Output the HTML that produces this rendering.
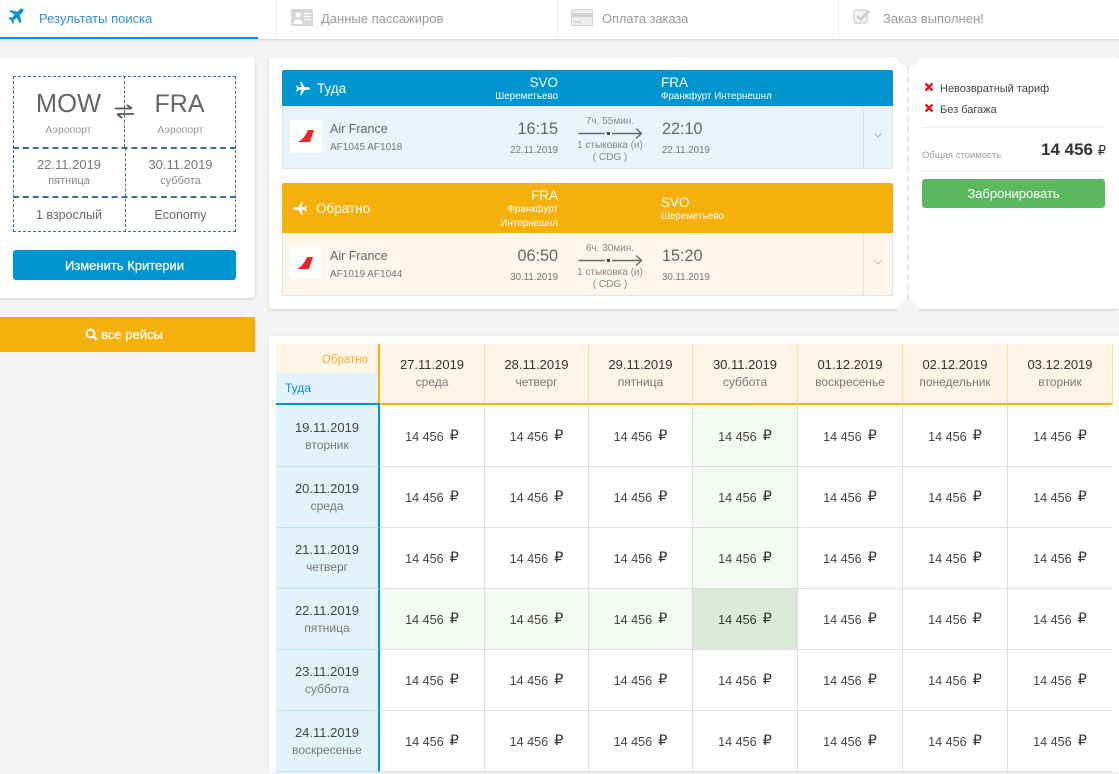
<!DOCTYPE html>
<html><head><meta charset="utf-8"><style>
*{box-sizing:border-box;margin:0;padding:0}
html,body{width:1119px;height:772px;overflow:hidden;background:#f3f3f3;font-family:"Liberation Sans",sans-serif;color:#555}
.a{position:absolute;white-space:nowrap}
.r{text-align:right}.c{text-align:center}
.card{position:absolute;background:#fff;box-shadow:0 1px 3px rgba(0,0,0,.15);border-radius:3px}
.dl{position:absolute;border-style:dashed;border-color:#3d7188;border-width:0}
#g{position:absolute;left:276px;top:344px;display:grid;grid-template-columns:104px 105px 104px 104px 105px 105px 105px 105px;grid-template-rows:61px 62px 61px 61px 61px 61px 61px}
#g>div{text-align:center;font-size:12.600px;border-right:1px solid #ddd;border-bottom:1px solid #ddd;color:#444}
#g>.h{background:#fef5e6;border-right:1px solid #fbdc9f;border-bottom:2px solid #f5b00b;padding-top:12px;line-height:17px;color:#333;font-size:13px}
#g small{display:block;font-size:12px;color:#777;line-height:18px}
#g>.d{background:#e3f3fb;border-right:2px solid #0094d2;border-bottom:1px solid #bfe3f3;padding-top:13px;line-height:17px;font-size:13px}
#g>.p{line-height:63px}
#g>.t{line-height:64px}
#g>.e{background:#f4f9f3}
#g>.f{background:#dbead8;color:#333}
#g>.l{border-right-color:transparent}
.rb{font-size:14.500px;margin-left:6px;font-family:"DejaVu Sans",sans-serif;color:#333;position:relative;top:-1px;line-height:1}
</style></head><body>

<!-- top nav -->
<div class="a" style="left:0;top:0;width:1119px;height:39px;background:#fff;box-shadow:0 1px 2px rgba(0,0,0,.15)"></div>
<div class="a" style="left:0;top:37px;width:258px;height:2px;background:#0094d2"></div>
<div class="a" style="left:276px;top:0;width:1px;height:39px;background:#f0f0f0"></div>
<div class="a" style="left:557px;top:0;width:1px;height:39px;background:#f0f0f0"></div>
<div class="a" style="left:838px;top:0;width:1px;height:39px;background:#f0f0f0"></div>
<svg class="a" style="left:8px;top:8px" width="16" height="17" viewBox="0 0 16 17"><path d="M15 .8c-1-.6-2.300-.2-3.200.7L9.500 3.800 2.800 2 1.300 3.300 6.600 6.600 3.900 9.600 1.500 9.200.3 10.300 3.300 12.300 4.800 16 6 14.800 5.700 12.500 8.900 9.700 12 15.500 13.500 14 11.800 7 14.300 4.500C15.200 3.500 15.700 1.800 15 .8z" fill="#0d8fd0"/></svg>
<div class="a" style="left:39px;top:11px;font-size:13px;color:#2d93d3">Результаты поиска</div>
<svg class="a" style="left:291px;top:9px" width="22" height="17" viewBox="0 0 22 17"><rect width="22" height="17" rx="1" fill="#d6d6d6"/><circle cx="7" cy="6" r="2.800" fill="#fff"/><path d="M2.500 15c0-3 1.500-4.500 4.500-4.500s4.500 1.500 4.500 4.500z" fill="#fff"/><path d="M13 4.500h7M13 7.500h7M13 10.500h7" stroke="#fff" stroke-width="1.200"/></svg>
<div class="a" style="left:321px;top:11px;font-size:13px;color:#999">Данные пассажиров</div>
<svg class="a" style="left:571px;top:9px" width="22" height="17" viewBox="0 0 22 17"><rect x=".5" y=".5" width="21" height="16" rx="1" fill="#eee" stroke="#d2d2d2"/><rect x="1" y="4" width="20" height="4" fill="#cfcfcf"/><path d="M3 13h3M7 13h3" stroke="#bbb"/></svg>
<div class="a" style="left:602px;top:11px;font-size:12.800px;color:#999">Оплата заказа</div>
<svg class="a" style="left:853px;top:8px" width="18" height="18" viewBox="0 0 18 18"><rect x="1" y="2" width="13" height="13" rx="2" fill="#f2f2f2" stroke="#d5d5d5" stroke-width="1.500"/><path d="M4 8l3.500 3.500L16 3" fill="none" stroke="#cfcfcf" stroke-width="3"/></svg>
<div class="a" style="left:883px;top:11px;font-size:13px;color:#999">Заказ выполнен!</div>

<!-- left card -->
<div class="card" style="left:-3px;top:57px;width:258px;height:241px"></div>
<div class="dl" style="left:13px;top:76px;width:223px;height:156px;border-width:1px"></div>
<div class="dl" style="left:13px;top:147px;width:223px;border-top-width:2px"></div>
<div class="dl" style="left:13px;top:196px;width:223px;border-top-width:2px"></div>
<div class="dl" style="left:124px;top:76px;height:71px;border-left-width:1px"></div>
<div class="dl" style="left:125px;top:148px;height:84px;border-left-width:1px"></div>
<div class="a c" style="left:13px;top:88px;width:111px;font-size:25.500px;color:#666;line-height:32px">MOW</div>
<div class="a c" style="left:124px;top:88px;width:111px;font-size:25px;color:#666;line-height:32px">FRA</div>
<svg class="a" style="left:115px;top:104px" width="19" height="15" viewBox="0 0 19 15"><path d="M0 4.500h16M12 1l5 3.500M19 10H3M7 14l-5-4" stroke="#555" stroke-width="1.800" fill="none"/></svg>
<div class="a c" style="left:13px;top:124px;width:111px;font-size:10.500px;color:#999">Аэропорт</div>
<div class="a c" style="left:125px;top:124px;width:111px;font-size:10.500px;color:#999">Аэропорт</div>
<div class="a c" style="left:13px;top:157px;width:112px;font-size:13px;color:#777">22.11.2019</div>
<div class="a c" style="left:125px;top:157px;width:111px;font-size:13px;color:#777">30.11.2019</div>
<div class="a c" style="left:13px;top:175px;width:112px;font-size:11px;color:#888">пятница</div>
<div class="a c" style="left:125px;top:175px;width:111px;font-size:11px;color:#888">суббота</div>
<div class="a c" style="left:13px;top:208px;width:112px;font-size:12.500px;color:#666">1 взрослый</div>
<div class="a c" style="left:125px;top:208px;width:111px;font-size:12.500px;color:#666">Economy</div>
<div class="a c" style="left:13px;top:250px;width:223px;height:30px;background:#0094d0;border-radius:3px;color:#fff;font-size:13px;line-height:31px;-webkit-text-stroke:.25px #fff">Изменить Критерии</div>
<div class="a c" style="left:0;top:317px;width:255px;height:35px;background:#f5b00b;color:#fff;font-size:13px;line-height:36px;padding-right:7px;-webkit-text-stroke:.25px #fff"><svg width="13" height="13" viewBox="0 0 13 13" style="vertical-align:-2px;margin-right:3px"><circle cx="5.500" cy="5.500" r="4" fill="none" stroke="#fff" stroke-width="2"/><path d="M8.500 8.500l3.500 3.500" stroke="#fff" stroke-width="2.500"/></svg>все рейсы</div>

<!-- center card -->
<div class="card" style="left:269px;top:57px;width:850px;height:252px"></div>
<div class="a" style="left:898px;top:47px;width:20px;height:20px;border-radius:50%;background:#f3f3f3"></div>
<div class="a" style="left:898px;top:300px;width:20px;height:20px;border-radius:50%;background:#f3f3f3"></div>
<div class="dl" style="left:907px;top:67px;height:233px;border-left:2px dashed #e6e6e6"></div>

<!-- outbound -->
<div class="a" style="left:282px;top:70px;width:611px;height:36px;background:#0094d0;border-radius:2px 2px 0 0"></div>
<div class="a" style="left:282px;top:106px;width:611px;height:63px;background:#e8f4fa;border:1px solid #dde5e9;border-top:0"></div>
<div class="a" style="left:863px;top:106px;width:1px;height:62px;background:#d5e2e8"></div>
<svg class="a" style="left:296px;top:82px" width="14" height="13" viewBox="0 0 14 13"><path d="M14 6.500c0-.8-1-1.300-2-1.300H8.800L5.500 0H4l1.500 5.200H2.600L1.300 3.600H.2L1 6.500.2 9.400h1.100l1.300-1.600h2.900L4 13h1.500l3.300-5.200H12c1 0 2-.5 2-1.300z" fill="#fff"/></svg>
<div class="a" style="left:317px;top:80px;font-size:13.500px;color:#fff;line-height:17px">Туда</div>
<div class="a r" style="left:458px;top:74px;width:100px;font-size:13.500px;color:#fff;line-height:17px">SVO</div>
<div class="a r" style="left:458px;top:90px;width:100px;font-size:9.800px;color:#fff;line-height:14px">Шереметьево</div>
<div class="a" style="left:661px;top:74px;font-size:13.500px;color:#fff;line-height:17px">FRA</div>
<div class="a" style="left:661px;top:90px;font-size:9.800px;color:#fff;line-height:14px">Франкфурт Интернешнл</div>
<div class="a" style="left:290px;top:120px;width:32px;height:33px;background:#fff"></div>
<svg class="a" style="left:298px;top:129px" width="17" height="14" viewBox="0 0 17 14"><path d="M10 1h6L12 13H0C4 11 7.500 7 10 1z" fill="#e8262c"/></svg>
<div class="a" style="left:330px;top:121px;font-size:12.500px;color:#666;line-height:16px">Air France</div>
<div class="a" style="left:330px;top:141px;font-size:10px;color:#777;line-height:13px">AF1045 AF1018</div>
<div class="a r" style="left:488px;top:119px;width:70px;font-size:16.200px;color:#666;line-height:20px">16:15</div>
<div class="a r" style="left:488px;top:144px;width:70px;font-size:9.700px;color:#777;line-height:13px">22.11.2019</div>
<div class="a c" style="left:560px;top:115px;width:100px;font-size:10px;color:#888;line-height:13px">7ч. 55мин.</div>
<svg class="a" style="left:577px;top:127px" width="67" height="13" viewBox="0 0 67 13"><path d="M1.500 6.500h26M35 6.500h29.500M59 1.500l5.500 5-5.500 5" fill="none" stroke="#666" stroke-width="1.400"/><rect x="30" y="5" width="3" height="3" fill="#444"/></svg>
<div class="a c" style="left:560px;top:140px;width:100px;font-size:10px;color:#888;line-height:12px">1 стыковка (и)</div>
<div class="a c" style="left:560px;top:152px;width:100px;font-size:10px;color:#888;line-height:12px">( CDG )</div>
<div class="a" style="left:662px;top:119px;font-size:16.200px;color:#666;line-height:20px">22:10</div>
<div class="a" style="left:662px;top:144px;font-size:9.700px;color:#777;line-height:13px">22.11.2019</div>
<svg class="a" style="left:873px;top:132px" width="10" height="7" viewBox="0 0 10 7"><path d="M1.500 1.500L5 5l3.500-3.500" fill="none" stroke="#a9b8c0"/></svg>

<!-- return -->
<div class="a" style="left:282px;top:183px;width:611px;height:50px;background:#f5b00b;border-radius:2px 2px 0 0"></div>
<div class="a" style="left:282px;top:233px;width:611px;height:63px;background:#fef6ea;border:1px solid #e5e3dd;border-top:0"></div>
<div class="a" style="left:863px;top:233px;width:1px;height:62px;background:#e5e2da"></div>
<svg class="a" style="left:293px;top:202px;transform:scaleX(-1)" width="14" height="13" viewBox="0 0 14 13"><path d="M14 6.500c0-.8-1-1.300-2-1.300H8.800L5.500 0H4l1.500 5.200H2.600L1.300 3.600H.2L1 6.500.2 9.400h1.100l1.300-1.600h2.900L4 13h1.500l3.300-5.200H12c1 0 2-.5 2-1.300z" fill="#fff"/></svg>
<div class="a" style="left:316px;top:200px;font-size:13.500px;color:#fff;line-height:17px">Обратно</div>
<div class="a r" style="left:458px;top:187px;width:100px;font-size:13.500px;color:#fff;line-height:17px">FRA</div>
<div class="a r" style="left:458px;top:203px;width:100px;font-size:9.800px;color:#fff;line-height:14px">Франкфурт</div>
<div class="a r" style="left:458px;top:217px;width:100px;font-size:9.800px;color:#fff;line-height:14px">Интернешнл</div>
<div class="a" style="left:661px;top:194px;font-size:13.500px;color:#fff;line-height:17px">SVO</div>
<div class="a" style="left:661px;top:210px;font-size:9.800px;color:#fff;line-height:14px">Шереметьево</div>
<div class="a" style="left:290px;top:247px;width:32px;height:32px;background:#fff"></div>
<svg class="a" style="left:297px;top:256px" width="17" height="14" viewBox="0 0 17 14"><path d="M10 1h6L12 13H0C4 11 7.500 7 10 1z" fill="#e8262c"/></svg>
<div class="a" style="left:330px;top:248px;font-size:12.500px;color:#666;line-height:16px">Air France</div>
<div class="a" style="left:330px;top:268px;font-size:10px;color:#777;line-height:13px">AF1019 AF1044</div>
<div class="a r" style="left:488px;top:246px;width:70px;font-size:16.200px;color:#666;line-height:20px">06:50</div>
<div class="a r" style="left:488px;top:271px;width:70px;font-size:9.700px;color:#777;line-height:13px">30.11.2019</div>
<div class="a c" style="left:560px;top:242px;width:100px;font-size:10px;color:#888;line-height:13px">6ч. 30мин.</div>
<svg class="a" style="left:577px;top:254px" width="67" height="13" viewBox="0 0 67 13"><path d="M1.500 6.500h26M35 6.500h29.500M59 1.500l5.500 5-5.500 5" fill="none" stroke="#666" stroke-width="1.400"/><rect x="30" y="5" width="3" height="3" fill="#444"/></svg>
<div class="a c" style="left:560px;top:267px;width:100px;font-size:10px;color:#888;line-height:12px">1 стыковка (и)</div>
<div class="a c" style="left:560px;top:279px;width:100px;font-size:10px;color:#888;line-height:12px">( CDG )</div>
<div class="a" style="left:662px;top:246px;font-size:16.200px;color:#666;line-height:20px">15:20</div>
<div class="a" style="left:662px;top:271px;font-size:9.700px;color:#777;line-height:13px">30.11.2019</div>
<svg class="a" style="left:873px;top:259px" width="10" height="7" viewBox="0 0 10 7"><path d="M1.500 1.500L5 5l3.500-3.500" fill="none" stroke="#b9b5aa"/></svg>

<!-- fare -->
<svg class="a" style="left:924px;top:82px" width="10" height="10" viewBox="0 0 10 10"><path d="M1.500 1.500l7 7M8.500 1.500l-7 7" stroke="#f01010" stroke-width="2.400"/></svg>
<div class="a" style="left:940px;top:82px;font-size:11px;color:#444;line-height:14px">Невозвратный тариф</div>
<svg class="a" style="left:924px;top:103px" width="10" height="10" viewBox="0 0 10 10"><path d="M1.500 1.500l7 7M8.500 1.500l-7 7" stroke="#f01010" stroke-width="2.400"/></svg>
<div class="a" style="left:940px;top:103px;font-size:11px;color:#444;line-height:14px">Без багажа</div>
<div class="a" style="left:922px;top:127px;width:183px;height:1px;background:#eee"></div>
<div class="a" style="left:922px;top:149px;font-size:9.500px;color:#999;line-height:14px">Общая стоимость</div>
<div class="a r" style="left:990px;top:139px;width:116px;font-size:17px;color:#333;line-height:21px;font-weight:bold">14 456 <span style="font-family:'DejaVu Sans';font-weight:normal;font-size:13px">₽</span></div>
<div class="a" style="left:922px;top:171px;width:183px;height:1px;background:#eee"></div>
<div class="a c" style="left:922px;top:179px;width:183px;height:29px;background:#5cb85c;border-radius:3px;color:#fff;font-size:13px;line-height:29px">Забронировать</div>

<!-- matrix -->
<div class="a" style="left:269px;top:336px;width:850px;height:436px;background:#fff;box-shadow:0 0 2px rgba(0,0,0,.08)"></div>
<div id="g">
<div style="background:none;border:0;position:relative;border-right:2px solid #f5b00b">
<div class="a r" style="left:0;top:0;width:102px;height:29px;background:#fef5e6;font-size:11.500px;line-height:32px;color:#f7a932;padding-right:10px">Обратно</div>
<div class="a" style="left:0;top:29px;width:102px;height:30px;background:#e3f3fb;font-size:12px;line-height:30px;color:#0e8fcf;padding-left:9px;text-align:left">Туда</div>
<div class="a" style="left:0;top:59px;width:104px;height:2px;background:#0094d2"></div>
</div>
<div class="h">27.11.2019<small>среда</small></div><div class="h">28.11.2019<small>четверг</small></div><div class="h">29.11.2019<small>пятница</small></div><div class="h">30.11.2019<small>суббота</small></div><div class="h">01.12.2019<small>воскресенье</small></div><div class="h">02.12.2019<small>понедельник</small></div><div class="h">03.12.2019<small>вторник</small></div>

<div class="d" style="padding-top:14px">19.11.2019<small>вторник</small></div>
<div class="p t">14 456<span class="rb">₽</span></div><div class="p t">14 456<span class="rb">₽</span></div><div class="p t">14 456<span class="rb">₽</span></div><div class="p t e">14 456<span class="rb">₽</span></div><div class="p t">14 456<span class="rb">₽</span></div><div class="p t">14 456<span class="rb">₽</span></div><div class="p t l">14 456<span class="rb">₽</span></div>

<div class="d">20.11.2019<small>среда</small></div>
<div class="p">14 456<span class="rb">₽</span></div><div class="p">14 456<span class="rb">₽</span></div><div class="p">14 456<span class="rb">₽</span></div><div class="p e">14 456<span class="rb">₽</span></div><div class="p">14 456<span class="rb">₽</span></div><div class="p">14 456<span class="rb">₽</span></div><div class="p l">14 456<span class="rb">₽</span></div>

<div class="d">21.11.2019<small>четверг</small></div>
<div class="p">14 456<span class="rb">₽</span></div><div class="p">14 456<span class="rb">₽</span></div><div class="p">14 456<span class="rb">₽</span></div><div class="p e">14 456<span class="rb">₽</span></div><div class="p">14 456<span class="rb">₽</span></div><div class="p">14 456<span class="rb">₽</span></div><div class="p l">14 456<span class="rb">₽</span></div>

<div class="d">22.11.2019<small>пятница</small></div>
<div class="p e">14 456<span class="rb">₽</span></div><div class="p e">14 456<span class="rb">₽</span></div><div class="p e">14 456<span class="rb">₽</span></div><div class="p f">14 456<span class="rb">₽</span></div><div class="p">14 456<span class="rb">₽</span></div><div class="p">14 456<span class="rb">₽</span></div><div class="p l">14 456<span class="rb">₽</span></div>

<div class="d">23.11.2019<small>суббота</small></div>
<div class="p">14 456<span class="rb">₽</span></div><div class="p">14 456<span class="rb">₽</span></div><div class="p">14 456<span class="rb">₽</span></div><div class="p">14 456<span class="rb">₽</span></div><div class="p">14 456<span class="rb">₽</span></div><div class="p">14 456<span class="rb">₽</span></div><div class="p l">14 456<span class="rb">₽</span></div>

<div class="d">24.11.2019<small>воскресенье</small></div>
<div class="p">14 456<span class="rb">₽</span></div><div class="p">14 456<span class="rb">₽</span></div><div class="p">14 456<span class="rb">₽</span></div><div class="p">14 456<span class="rb">₽</span></div><div class="p">14 456<span class="rb">₽</span></div><div class="p">14 456<span class="rb">₽</span></div><div class="p l">14 456<span class="rb">₽</span></div>
</div>
</body></html>
